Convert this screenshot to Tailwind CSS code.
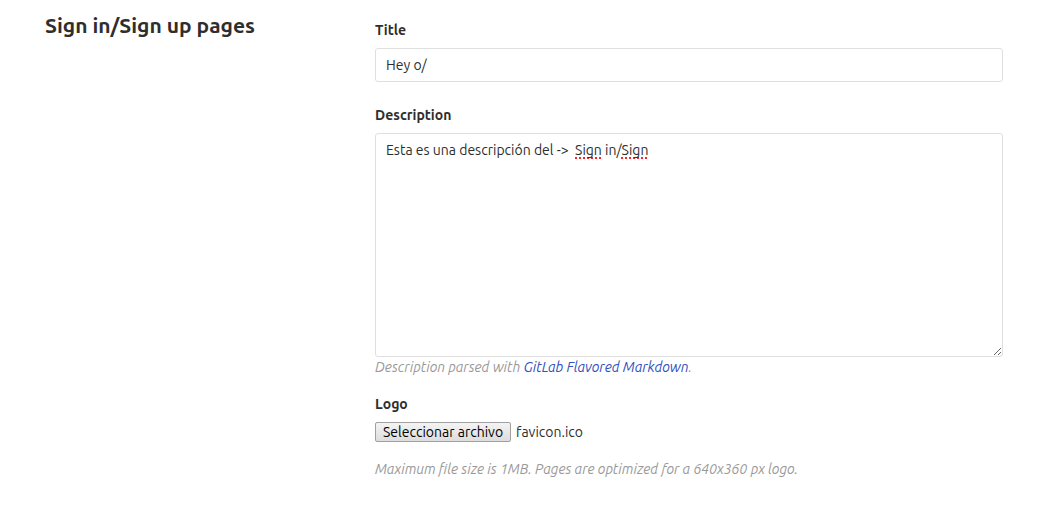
<!DOCTYPE html>
<html lang="en">
<head>
<meta charset="utf-8">
<meta name="viewport" content="width=device-width, initial-scale=1">
<title>Appearance settings</title>
<script src="https://cdn.jsdelivr.net/npm/@tailwindcss/browser@4"></script>
</head>
<body class="bg-white font-['Ubuntu','Noto_Sans',sans-serif] text-[14px] leading-5 text-[#2e2e2e]">
<form class="grid grid-cols-[330fr_628fr] pl-[45px] pr-10 pt-3">
  <h1 class="text-[21px] leading-[26px] font-bold">Sign in/Sign up pages</h1>
  <div class="flex flex-col pt-2">
    <label for="title" class="font-bold">Title</label>
    <input id="title" type="text" value="Hey o/" class="mt-2 h-[34px] w-full rounded-[3px] border border-[#dfdfdf] px-[10px] outline-none">

    <label for="description" class="mt-[23px] font-bold">Description</label>
    <div class="relative mt-2 flex">
      <!-- Spelling marks, laid under the textarea's own text -->
      <div aria-hidden="true" class="pointer-events-none absolute inset-0 px-[11px] py-[7px] whitespace-pre-wrap text-transparent">Esta es una descripción del -&gt;  <span class="underline decoration-dotted decoration-[#ff2020] decoration-2 underline-offset-2 [text-decoration-skip-ink:none]">Sign</span> in/<span class="underline decoration-dotted decoration-[#ff2020] decoration-2 underline-offset-2 [text-decoration-skip-ink:none]">Sign</span></div>
      <textarea id="description" spellcheck="false" class="relative h-[224px] w-full resize rounded-[3px] border border-[#dfdfdf] bg-transparent px-[10px] py-[6px] outline-none">Esta es una descripción del -&gt;  Sign in/Sign</textarea>
    </div>
    <p class="text-[#999999] italic">Description parsed with <a href="#" class="text-[#3050c0]">GitLab Flavored Markdown</a>.</p>

    <label for="logo" class="mt-[17px] font-bold">Logo</label>
    <div class="mt-2 flex items-center gap-[5px]">
      <input id="logo" type="file" class="hidden">
      <button type="button" onclick="document.getElementById('logo').click()" class="h-5 rounded-[2px] border border-[#a0a0a0] bg-linear-to-b from-[#f4f4f4] to-[#dddddd] px-[7px] leading-[18px] text-black">Seleccionar archivo</button>
      <span>favicon.ico</span>
    </div>
    <p class="mt-[17px] text-[#999999] italic">Maximum file size is 1MB. Pages are optimized for a 640x360 px logo.</p>
  </div>
</form>
</body>
</html>
